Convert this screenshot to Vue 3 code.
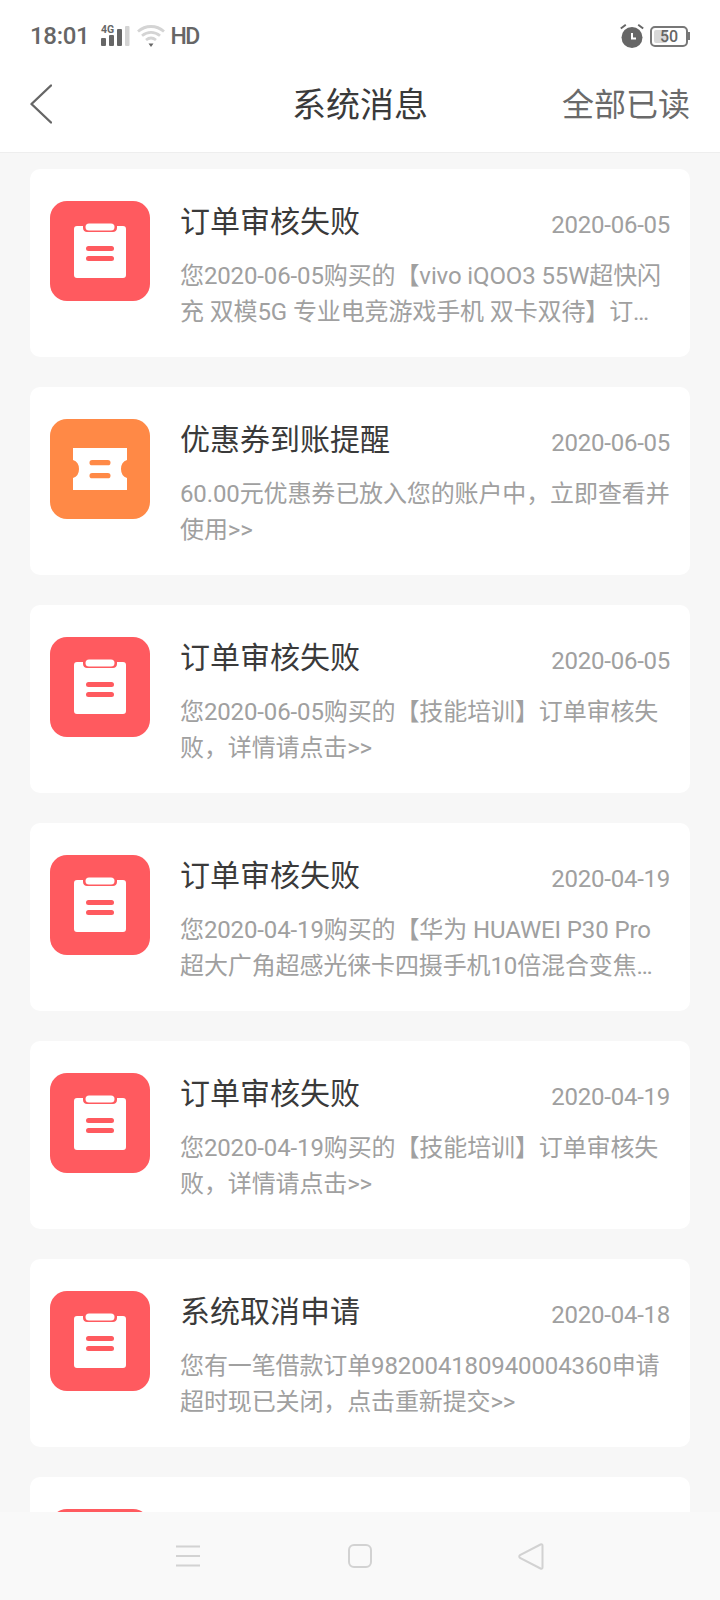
<script setup>
const items = [
  { t: '订单审核失败', d: '2020-06-05', m: '您2020-06-05购买的【vivo iQOO3 55W超快闪充 双模5G 专业电竞游戏手机 双卡双待】订单审核失败，详情请点击>>', k: 'clip' },
  { t: '优惠券到账提醒', d: '2020-06-05', m: '60.00元优惠券已放入您的账户中，立即查看并使用>>', k: 'ticket' },
  { t: '订单审核失败', d: '2020-06-05', m: '您2020-06-05购买的【技能培训】订单审核失败，详情请点击>>', k: 'clip' },
  { t: '订单审核失败', d: '2020-04-19', m: '您2020-04-19购买的【华为 HUAWEI P30 Pro 超大广角超感光徕卡四摄手机10倍混合变焦麒麟980芯片】订单审核失败', k: 'clip' },
  { t: '订单审核失败', d: '2020-04-19', m: '您2020-04-19购买的【技能培训】订单审核失败，详情请点击>>', k: 'clip' },
  { t: '系统取消申请', d: '2020-04-18', m: '您有一笔借款订单982004180940004360申请超时现已关闭，点击重新提交>>', k: 'clip' },
  { t: '', d: '', m: '', k: 'clip' }
]
</script>

<template>
  <div class="page">
    <div class="status">
      <div class="status-left">
        <span class="time">18:01</span>
        <svg class="signal" width="30" height="24" viewBox="0 0 30 24">
          <text x="1" y="9" class="g4">4G</text>
          <rect x="1" y="14" width="5" height="8" rx="1" fill="#666"/>
          <rect x="9" y="11" width="5" height="11" rx="1" fill="#666"/>
          <rect x="17" y="5" width="5" height="17" rx="1" fill="#666"/>
          <rect x="25" y="2" width="4.500" height="20" rx="1" fill="#d4d4d4"/>
        </svg>
        <svg class="wifi" width="28" height="24" viewBox="0 0 28 24" fill="none">
          <path d="M1 7.500C8.500 0.800 19.500 0.800 27 7.500" stroke="#d4d4d4" stroke-width="2.800"/>
          <path d="M5 11.800C10.500 7.200 17.500 7.200 23 11.800" stroke="#d4d4d4" stroke-width="2.800"/>
          <path d="M9 16C12 13.600 16 13.600 19 16" stroke="#d4d4d4" stroke-width="2.800"/>
          <path d="M11.500 19.500H16.500L14 23Z" fill="#666"/>
        </svg>
        <span class="hd">HD</span>
      </div>
      <div class="status-right">
        <svg width="24" height="24" viewBox="0 0 24 24">
          <circle cx="12" cy="13.500" r="10.500" fill="#666"/>
          <path d="M12 9V14.500H16" stroke="#fff" stroke-width="2" fill="none"/>
          <path d="M0.800 4.500L5.800 0.800M23.200 4.500L18.200 0.800" stroke="#666" stroke-width="2"/>
        </svg>
        <div class="battery">
          <div class="level"></div>
          <span class="pct">50</span>
          <i class="nub"></i>
        </div>
      </div>
    </div>

    <header class="head">
      <svg class="back" width="22" height="40" viewBox="0 0 22 40" fill="none">
        <path d="M21 1.500L1.500 20L21 38.500" stroke="#666" stroke-width="2.400" stroke-linecap="round" stroke-linejoin="round"/>
      </svg>
      <h1 class="title">系统消息</h1>
      <span class="read">全部已读</span>
    </header>

    <main class="list">
      <article v-for="(it, i) in items" :key="i" class="card">
        <div class="icon" :class="it.k">
          <svg v-if="it.k === 'clip'" width="54" height="56" viewBox="0 0 54 56">
            <path d="M4 3H10V5C10 7.500 12 9 14 9H40C42 9 44 7.500 44 5V3H50C52 3 53 4 53 6V52C53 54 52 55 50 55H4C2 55 1 54 1 52V6C1 4 2 3 4 3Z" fill="#fff"/>
            <rect x="12.500" y="0.500" width="29" height="7" rx="3.500" fill="#fff"/>
            <rect x="13" y="23" width="28" height="5" rx="2.500" fill="#ff5a5f"/>
            <rect x="13" y="33" width="28" height="5" rx="2.500" fill="#ff5a5f"/>
          </svg>
          <svg v-else width="56" height="44" viewBox="0 0 56 44">
            <path d="M1 1H55V13Q49 15 49 22Q49 29 55 31V43H1V31Q7 29 7 22Q7 15 1 13Z" fill="#fff"/>
            <rect x="17.500" y="13" width="21" height="5.300" rx="2.600" fill="#ff8946"/>
            <rect x="17.500" y="26" width="21" height="5.300" rx="2.600" fill="#ff8946"/>
          </svg>
        </div>
        <div class="body">
          <div class="row">
            <h2 class="name">{{ it.t }}</h2>
            <span class="date">{{ it.d }}</span>
          </div>
          <p class="msg">{{ it.m }}</p>
        </div>
      </article>
    </main>

    <nav class="nav">
      <svg width="24" height="22" viewBox="0 0 24 22"><path d="M0 1.500H24M0 11H24M0 20.500H24" stroke="#d2d2d2" stroke-width="2"/></svg>
      <svg width="24" height="24" viewBox="0 0 24 24" fill="none"><rect x="1" y="1" width="22" height="22" rx="5" stroke="#d2d2d2" stroke-width="2"/></svg>
      <svg class="tri" width="26" height="27" viewBox="0 0 26 27" fill="none"><path d="M24.500 2.500V24.500C24.500 25.500 23.500 26 22.500 25.500L2 15C1 14.300 1 12.700 2 12L22.500 1.500C23.500 1 24.500 1.500 24.500 2.500Z" stroke="#d2d2d2" stroke-width="2"/></svg>
    </nav>
  </div>
</template>

<style>
html, body { margin: 0; background: #f7f7f7; }
</style>

<style scoped>
.page {
  width: 720px;
  height: 1600px;
  display: flex;
  flex-direction: column;
  overflow: hidden;
  background: #f7f7f7;
  font-family: "Noto Sans CJK SC", "Noto Sans", sans-serif;
}
.status {
  height: 64px;
  flex: none;
  background: #fff;
  display: flex;
  align-items: center;
  justify-content: space-between;
  padding: 8px 30px 0;
  box-sizing: border-box;
  color: #666;
}
.status-left, .status-right { display: flex; align-items: center; }
.time { font: 500 24px/1 Roboto, sans-serif; letter-spacing: -0.300px; }
.signal { margin-left: 11px; }
.g4 { font: 700 10.500px Roboto, sans-serif; fill: #666; }
.wifi { margin-left: 7px; }
.hd { font: 500 23px/1 Roboto, sans-serif; letter-spacing: -1.500px; margin-left: 5px; }
.status-right { gap: 6px; margin-right: 2px; }
.battery {
  position: relative;
  width: 34px;
  height: 17px;
  border: 2px solid #777;
  border-radius: 5px;
}
.level {
  position: absolute;
  left: 2px;
  top: 2px;
  bottom: 2px;
  width: 13px;
  background: #d8d8d8;
  border-radius: 2px;
}
.pct {
  position: absolute;
  inset: 0;
  text-align: center;
  font: 500 16px/17px Roboto, sans-serif;
  color: #666;
}
.nub {
  position: absolute;
  right: -4px;
  top: 4px;
  width: 2px;
  height: 8px;
  background: #777;
}
.head {
  height: 89px;
  flex: none;
  background: #fff;
  border-bottom: 1px solid #eee;
  box-sizing: border-box;
  display: flex;
  align-items: center;
  justify-content: space-between;
  padding: 0 30px 12px;
  position: relative;
}
.back { margin-top: 3px; }
.title {
  position: absolute;
  left: 0;
  right: 0;
  margin: 0;
  text-align: center;
  font-size: 34px;
  font-weight: 400;
  color: #3a3a3a;
}
.read { font-size: 32px; color: #6a6a6a; }
.list {
  flex: 1;
  min-height: 0;
  overflow: hidden;
  padding: 16px 30px 0;
}
.card {
  height: 188px;
  box-sizing: border-box;
  margin-bottom: 30px;
  background: #fff;
  border-radius: 10px;
  display: flex;
  padding: 32px 20px 0;
}
.icon {
  width: 100px;
  height: 100px;
  flex: none;
  border-radius: 17px;
  display: flex;
  align-items: center;
  justify-content: center;
}
.clip { background: #ff5a5f; }
.ticket { background: #ff8946; }
.body { margin-left: 30px; flex: 1; min-width: 0; margin-top: -8px; }
.row {
  display: flex;
  justify-content: space-between;
  align-items: flex-start;
}
.name { margin: 0; font-size: 30px; font-weight: 400; line-height: 52px; color: #3a3a3a; }
.date { font: 24px/62px Roboto, sans-serif; letter-spacing: -0.250px; color: #a0a0a0; margin-top: 1px; }
.msg {
  margin: 2px 0 0;
  font-family: Roboto, "Noto Sans CJK SC", sans-serif;
  font-size: 24px;
  letter-spacing: -0.120px;
  line-height: 36px;
  color: #a0a0a0;
  display: -webkit-box;
  -webkit-line-clamp: 2;
  -webkit-box-orient: vertical;
  overflow: hidden;
}
.nav {
  height: 88px;
  flex: none;
  background: #f9f9f9;
  display: flex;
  align-items: center;
  padding-left: 176px;
  gap: 148px;
}
.tri { margin-left: -2px; }
</style>
